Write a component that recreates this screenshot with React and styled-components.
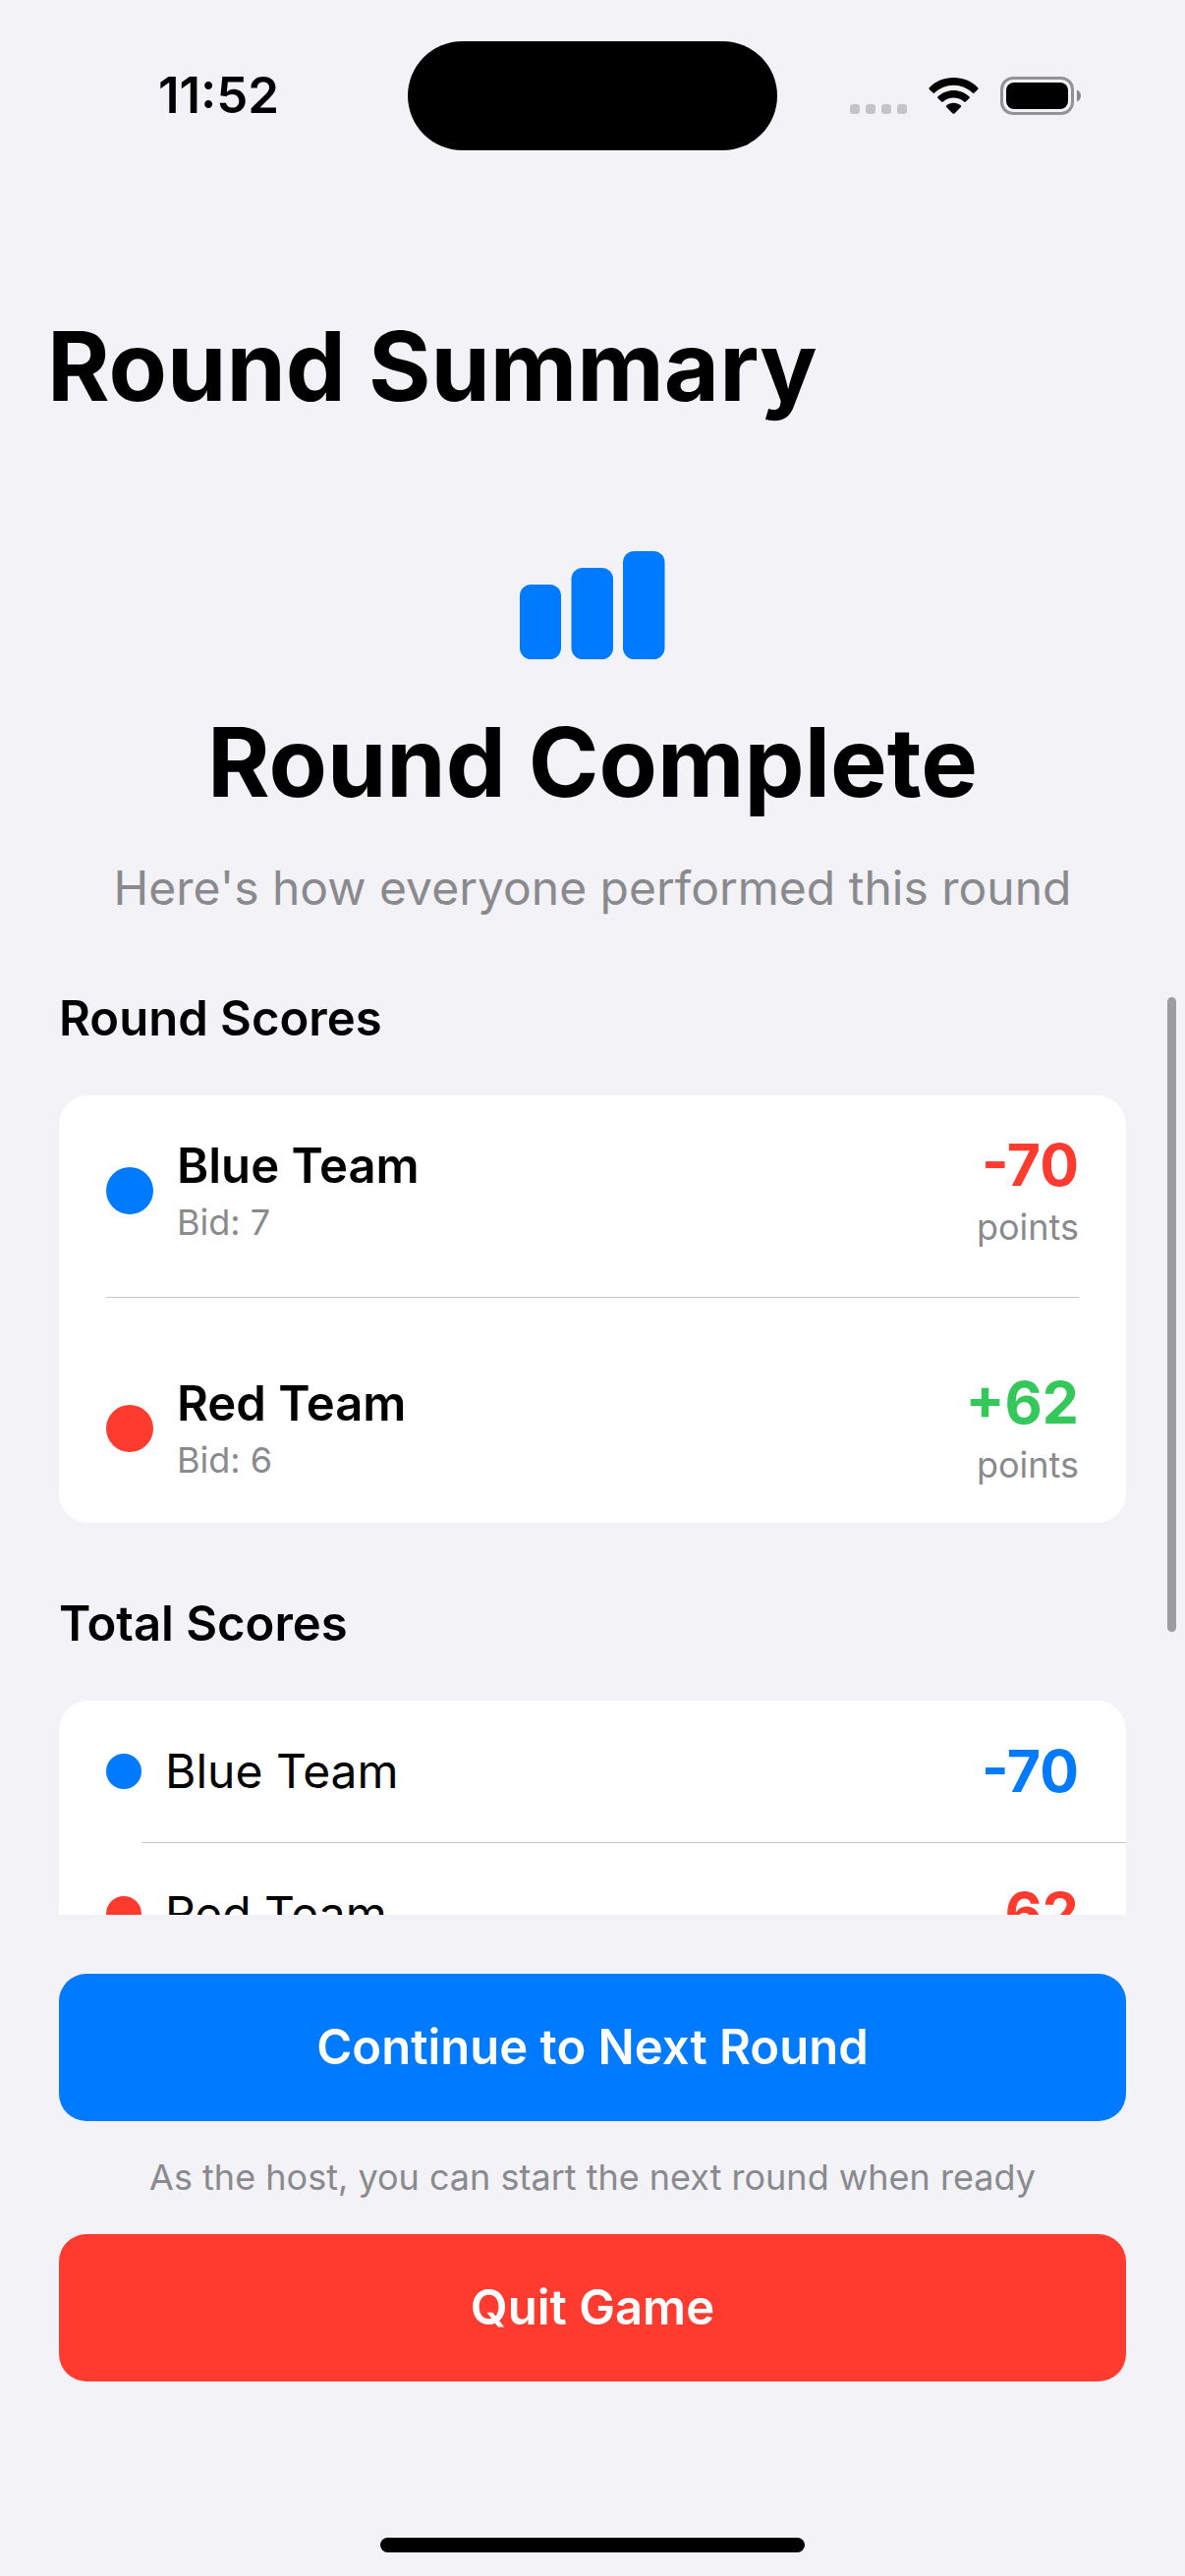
import React from "react";
import styled, { createGlobalStyle } from "styled-components";

const color = {
  background: "#f2f2f7",
  card: "#ffffff",
  text: "#000000",
  secondary: "#8a8a8e",
  separator: "#c6c6c8",
  blue: "#007aff",
  red: "#ff3b30",
  green: "#34c759",
};

const GlobalStyle = createGlobalStyle`
  *, *::before, *::after { box-sizing: border-box; }
  body {
    margin: 0;
    background: ${color.background};
    color: ${color.text};
    font-family: Inter, "Liberation Sans", sans-serif;
    -webkit-font-smoothing: antialiased;
  }
  h1, h2, h3, p, ul { margin: 0; padding: 0; }
  ul { list-style: none; }
`;

const Screen = styled.div`
  display: flex;
  flex-direction: column;
  height: 100vh;
  background: ${color.background};
`;

const StatusBar = styled.header`
  flex: none;
  display: grid;
  grid-template-columns: 1fr 376px 1fr;
  align-items: center;
  height: 194px;
`;

const Time = styled.time`
  padding-left: 30px;
  text-align: center;
  font-size: 51px;
  line-height: 60px;
  font-weight: 600;
`;

const Island = styled.div`
  height: 111px;
  border-radius: 56px;
  background: #000;
`;

const StatusIcons = styled.div`
  display: flex;
  justify-content: flex-end;
  padding-right: 106px;
`;

const Body = styled.div`
  position: relative;
  flex: 1;
  min-height: 0;
  display: flex;
  flex-direction: column;
`;

const Scroller = styled.main`
  flex: 1;
  min-height: 0;
  overflow-y: auto;
  scrollbar-width: none;
  padding: 117px 60px 60px;
`;

const ScrollThumb = styled.div`
  position: absolute;
  top: 821px;
  right: 9px;
  width: 9px;
  height: 646px;
  border-radius: 5px;
  background: #9c9ca1;
`;

const PageTitle = styled.h1`
  margin-left: -12px;
  font-size: 97px;
  line-height: 124px;
  font-weight: 700;
`;

const Hero = styled.section`
  display: flex;
  flex-direction: column;
  align-items: center;
  margin-top: 126px;
  text-align: center;
`;

const HeroTitle = styled.h2`
  margin-top: 43px;
  font-size: 97px;
  line-height: 124px;
  font-weight: 700;
`;

const HeroText = styled.p`
  margin-top: 36px;
  font-size: 48px;
  line-height: 60px;
  color: ${color.secondary};
  white-space: nowrap;
`;

const Section = styled.section`
  margin-top: 73px;
`;

const SectionTitle = styled.h3`
  font-size: 49px;
  line-height: 60px;
  font-weight: 600;
`;

const Card = styled.ul`
  margin-top: 48px;
  border-radius: 30px;
  background: ${color.card};
`;

const Row = styled.li`
  display: flex;
  align-items: center;
  gap: 24px;
  height: ${(p) => p.$height}px;
  padding: 0 48px;
`;

const Separator = styled.li`
  height: 1px;
  margin: ${(p) => (p.$spaced ? "12px 48px 36px" : "0 0 0 84px")};
  background: ${color.separator};
`;

const TeamDot = styled.span`
  flex: none;
  width: ${(p) => p.$size}px;
  height: ${(p) => p.$size}px;
  border-radius: 50%;
  background: ${(p) => p.$color};
`;

const Stack = styled.div`
  flex: ${(p) => (p.$grow ? 1 : "none")};
  display: flex;
  flex-direction: column;
  gap: ${(p) => p.$gap}px;
  text-align: ${(p) => (p.$grow ? "left" : "right")};
`;

const TeamName = styled.span`
  flex: 1;
  font-size: ${(p) => (p.$strong ? 49 : 48)}px;
  line-height: 62px;
  font-weight: ${(p) => (p.$strong ? 600 : 400)};
`;

const Caption = styled.span`
  font-size: 36px;
  line-height: 48px;
  color: ${color.secondary};
`;

const Score = styled.span`
  font-size: 59px;
  line-height: 72px;
  font-weight: 700;
  color: ${(p) => p.$color};
`;

const Footer = styled.footer`
  flex: none;
  display: flex;
  flex-direction: column;
  padding: 60px 60px 24px;
`;

const ActionButton = styled.button`
  height: 150px;
  border: 0;
  border-radius: 28px;
  background: ${(p) => p.$color};
  color: #fff;
  font-family: inherit;
  font-size: 49px;
  line-height: 60px;
  font-weight: 600;
`;

const Hint = styled.p`
  margin: 33px 0 34px;
  font-size: 36px;
  line-height: 48px;
  text-align: center;
  color: ${color.secondary};
`;

const HomeIndicator = styled.div`
  align-self: center;
  width: 432px;
  height: 15px;
  margin-top: 159px;
  border-radius: 8px;
  background: #000;
`;

const StatusGlyphs = () => (
  <svg width="235" height="40" viewBox="0 -1 235 40" role="img" aria-label="No signal, Wi-Fi, battery full">
    <g fill="#c4c4c8">
      <rect x="0" y="28" width="10" height="10" rx="3" />
      <rect x="16" y="28" width="10" height="10" rx="3" />
      <rect x="32" y="28" width="10" height="10" rx="3" />
      <rect x="48" y="28" width="10" height="10" rx="3" />
    </g>
    <g transform="translate(80 1)" fill="#000">
      <path d="M25.5 0C35 0 43.800 3.600 50.200 10.200C50.700 10.700 50.700 11.400 50.200 11.900L46.500 15.500C46 16 45.300 16 44.800 15.500C39.600 10.500 32.800 7.700 25.500 7.700C18.200 7.700 11.400 10.500 6.200 15.500C5.700 16 5 16 4.500 15.500L.8 11.900C.3 11.400 .3 10.700 .8 10.200C7.200 3.600 16 0 25.500 0Z" />
      <path d="M25.500 12.900C31.600 12.900 37.200 15.200 41.500 19.200C42 19.700 42 20.400 41.500 20.900L37.800 24.500C37.300 25 36.600 25 36.100 24.500C33.200 22 29.500 20.600 25.500 20.600C21.500 20.600 17.800 22 14.900 24.500C14.400 25 13.700 25 13.200 24.500L9.500 20.900C9 20.400 9 19.700 9.500 19.200C13.800 15.200 19.400 12.900 25.500 12.900Z" />
      <path d="M25.500 25.700C28.300 25.700 30.800 26.600 32.800 28.200C33.300 28.700 33.300 29.400 32.800 29.900L26.500 36.400C25.900 37 25.100 37 24.500 36.400L18.200 29.900C17.700 29.400 17.700 28.700 18.200 28.200C20.200 26.600 22.700 25.700 25.500 25.700Z" />
    </g>
    <rect x="154.500" y="1.500" width="72" height="36" rx="11.500" fill="none" stroke="#939396" strokeWidth="3" />
    <rect x="159" y="6" width="63" height="27" rx="8" fill="#000" />
    <path d="M231 13.500C233.500 14.500 235 17 235 19.500C235 22 233.500 24.500 231 25.500Z" fill="#868689" />
  </svg>
);

const BarsIcon = () => (
  <svg width="148" height="110" viewBox="0 0 148 110" aria-hidden="true" fill={color.blue}>
    <rect x="0" y="34" width="42" height="76" rx="11.500" />
    <rect x="52.500" y="17" width="42.500" height="93" rx="11.500" />
    <rect x="105" y="0" width="42.500" height="110" rx="11.500" />
  </svg>
);

const teams = [
  { name: "Blue Team", color: color.blue, bid: 7, round: -70, total: -70 },
  { name: "Red Team", color: color.red, bid: 6, round: 62, total: 62 },
];

export default function App() {
  return (
    <>
      <GlobalStyle />
      <Screen>
        <StatusBar>
          <Time>11:52</Time>
          <Island />
          <StatusIcons>
            <StatusGlyphs />
          </StatusIcons>
        </StatusBar>

        <Body>
          <Scroller>
            <PageTitle>Round Summary</PageTitle>
            <Hero>
              <BarsIcon />
              <HeroTitle>Round Complete</HeroTitle>
              <HeroText>Here's how everyone performed this round</HeroText>
            </Hero>

            <Section>
              <SectionTitle>Round Scores</SectionTitle>
              <Card>
                {teams.map((team, i) => (
                  <React.Fragment key={team.name}>
                    {i > 0 && <Separator role="presentation" $spaced />}
                    <Row $height={193}>
                      <TeamDot $size={48} $color={team.color} />
                      <Stack $grow $gap={2}>
                        <TeamName $strong>{team.name}</TeamName>
                        <Caption>Bid: {team.bid}</Caption>
                      </Stack>
                      <Stack $gap={3}>
                        <Score $color={team.round < 0 ? color.red : color.green}>
                          {team.round > 0 ? `+${team.round}` : team.round}
                        </Score>
                        <Caption>points</Caption>
                      </Stack>
                    </Row>
                  </React.Fragment>
                ))}
              </Card>
            </Section>

            <Section>
              <SectionTitle>Total Scores</SectionTitle>
              <Card>
                {teams.map((team, i) => (
                  <React.Fragment key={team.name}>
                    {i > 0 && <Separator role="presentation" />}
                    <Row $height={144}>
                      <TeamDot $size={36} $color={team.color} />
                      <TeamName>{team.name}</TeamName>
                      <Score $color={team.color}>{team.total}</Score>
                    </Row>
                  </React.Fragment>
                ))}
              </Card>
            </Section>
          </Scroller>
          <ScrollThumb />
        </Body>

        <Footer>
          <ActionButton type="button" $color={color.blue}>Continue to Next Round</ActionButton>
          <Hint>As the host, you can start the next round when ready</Hint>
          <ActionButton type="button" $color={color.red}>Quit Game</ActionButton>
          <HomeIndicator />
        </Footer>
      </Screen>
    </>
  );
}
